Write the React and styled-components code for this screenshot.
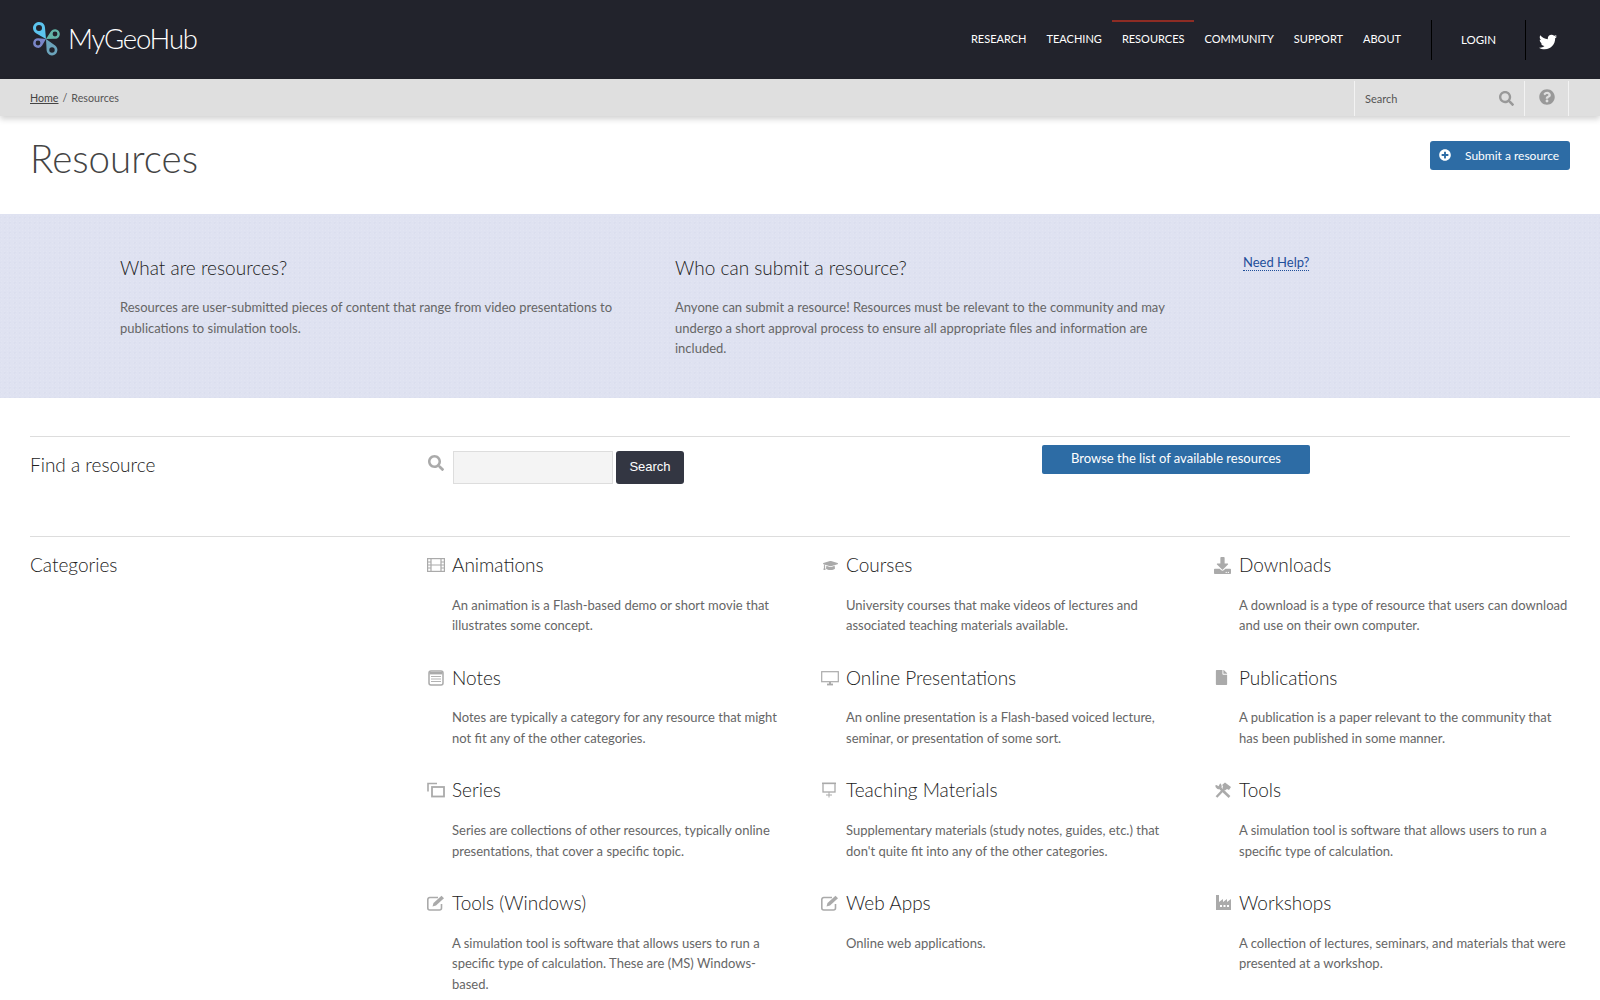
import React from "react";
import styled, { createGlobalStyle } from "styled-components";
import { FaSearch, FaQuestionCircle, FaPlusCircle, FaTwitter, FaGraduationCap, FaDownload, FaFile } from "react-icons/fa";

const Global = createGlobalStyle`
  html, body { margin: 0; padding: 0; background: #fff; }
  body { font-family: Lato, "Liberation Sans", sans-serif; color: #555; font-size: 13px; overflow-x: hidden; }
  * { box-sizing: border-box; }
`;

const Page = styled.div`width: 1600px; height: 1000px; overflow: hidden;`;

const Header = styled.header`
  height: 79px; background: #22232c; display: flex; align-items: flex-start; justify-content: space-between;
`;
const Logo = styled.a`
  display: flex; align-items: center; gap: 6px; margin: 20px 0 0 32px; color: #fff;
  font-weight: 300; font-size: 27.5px; letter-spacing: -1.2px; line-height: 38px;
`;
const RightHead = styled.div`display: flex; align-items: flex-start; padding-top: 20px;`;
const Nav = styled.nav`display: flex; margin-right: 20px;`;
const NavItem = styled.a`
  height: 40px; padding: 0 10px; border-top: 2px solid ${p => (p.$active ? "#8e2c24" : "transparent")};
  color: #fff; font-size: 11px; line-height: 34px; text-transform: uppercase; white-space: nowrap;
`;
const Login = styled.a`
  width: 95px; height: 40px; border-left: 1px solid #000; border-right: 1px solid #000;
  color: #fff; font-size: 11.5px; line-height: 40px; text-align: center; text-transform: uppercase;
`;
const Tw = styled.a`width: 74px; height: 40px; color: #fff; padding: 13px 0 0 13px; font-size: 18px; line-height: 1;`;

const Crumbs = styled.div`
  height: 37px; background: #dfdfdf; box-shadow: 0 3px 6px rgba(0,0,0,.18); display: flex; justify-content: space-between;
  position: relative; padding-left: 30px; align-items: stretch;
`;
const Trail = styled.div`font-size: 10.7px; line-height: 37px; color: #555; a { color: #444; text-decoration: underline; } span { margin: 0 4px; }`;
const Tools = styled.div`display: flex; margin-right: 31px; padding-top: 2px;`;
const SearchBox = styled.div`
  width: 171px; height: 35px; border-left: 1px solid #f3f3f3; border-right: 1px solid #f3f3f3; display: flex; align-items: center; justify-content: space-between;
  padding: 0 10px; font-size: 11px; color: #555; svg { color: #999; font-size: 15px; }
`;
const HelpBox = styled.div`
  width: 44px; height: 35px; border-right: 1px solid #f3f3f3; display: flex; justify-content: center; padding: 8px 0 0 1px; color: #999; font-size: 16px;
`;

const TitleRow = styled.div`height: 98px; padding: 23px 30px 0; display: flex; justify-content: space-between; align-items: flex-start;`;
const Title = styled.h1`margin: 0; font-size: 38.5px; font-weight: 300; color: #444; line-height: 38px;`;
const Submit = styled.a`
  display: flex; align-items: flex-start; width: 140px; height: 29px; margin-top: 2px; background: #2d6ca5; border-radius: 3px; color: #fff; font-size: 12px; line-height: 29px;
  padding-left: 9px; gap: 14px; white-space: nowrap; svg { margin-top: 8px; font-size: 12px; }
`;

const Band = styled.section`
  height: 184px; background-color: #dfe2f1;
  background-image: radial-gradient(rgba(255,255,255,.09) 1px, transparent 1px), radial-gradient(rgba(110,120,170,.035) 1px, transparent 1px);
  background-size: 3px 3px, 5px 5px; background-position: 0 0, 2px 1px;
  padding: 40px 0 0 120px; display: grid; grid-template-columns: 555px 568px auto;
`;
const BandCol = styled.div`width: ${p => p.$w || "auto"};`;
const BandH = styled.h3`margin: 0 0 16px; font-size: 19px; line-height: 27px; font-weight: 300; color: #222;`;
const BandP = styled.p`margin: 0; font-size: 13px; line-height: 20.5px; color: #666;`;
const HelpLink = styled.a`display: inline-block; margin-top: -2px; color: #1f4f9a; font-size: 13px; line-height: 16px; border-bottom: 1px dotted #1f4f9a;`;

const Row = styled.section`
  margin: 0 30px; border-top: 1px solid #ddd; display: grid; grid-template-columns: 361px 357px 357px 357px; column-gap: 36px;
`;
const FindRow = styled(Row)`margin-top: 38px; height: 100px;`;
const SideH = styled.h3`margin: 0; padding-top: 14px; font-size: 19px; line-height: 28px; font-weight: 300; color: #222;`;
const FindField = styled.div`display: flex; align-items: flex-start; padding-top: 14px; color: #aaa; font-size: 16px; svg { margin: 4px 0 0 1px; }`;
const Input = styled.input`
  width: 160px; height: 33px; margin-left: 9px; border: 1px solid #ddd; background: #f4f4f4; border-radius: 0;
`;
const SearchBtn = styled.button`
  width: 68px; height: 33px; margin-left: 3px; padding: 0 0 2px; border: 0; border-radius: 3px; background: #333642; color: #fff; font: 13px "Liberation Sans", sans-serif;
`;
const BrowseWrap = styled.div`grid-column: span 2; padding: 8px 0 0 222px;`;
const Browse = styled.a`
  display: block; width: 268px; height: 29px; background: #2d6ca5; border-radius: 2px; color: #fff; font-size: 13px; line-height: 27px; text-align: center;
`;

const CatGrid = styled.div`grid-column: span 3; display: grid; grid-template-columns: 357px 356px 356px; column-gap: 37px; padding-top: 14px; grid-auto-rows: 112.7px;`;
const Cat = styled.article`display: grid; grid-template-columns: 25px 1fr;`;
const IconCell = styled.div`color: #aaa; font-size: ${p => p.$size || 17}px; height: 28px; display: flex; align-items: center; svg { display: block; }`;
const CatH = styled.h3`margin: 0 0 15.7px; font-size: 19px; font-weight: 300; line-height: 28px; color: #222;`;
const CatP = styled.p`margin: 0; font-size: 13px; line-height: 20.5px; color: #666;`;

const Draw = ({ children, w = 18, h = 16, fill = "none" }) => (
  <svg width={w} height={h} viewBox={`0 0 ${w} ${h}`} fill={fill} stroke={fill === "none" ? "#aaa" : "none"} strokeWidth="1.2">{children}</svg>
);
const Film = () => <Draw><rect x=".6" y="1.6" width="16.8" height="12.8" /><path d="M4 2v12M14 2v12M4 8h10M.6 5h3.4M.6 8h3.4M.6 11h3.4M14 5h3.4M14 8h3.4M14 11h3.4" /></Draw>;
const Notes = () => <Draw w={18} h={16}><rect x="2" y="1" width="14" height="14" rx="2" strokeWidth="1.5" /><path d="M2.500 3.200h13" strokeWidth="2.4" /><path d="M4 6.500h10M4 9h10M4 11.500h10" strokeWidth=".9" /></Draw>;
const Series = () => <Draw><path d="M1 9.500V1.500h9" strokeWidth="1.6" /><rect x="5" y="5" width="12" height="9.500" strokeWidth="1.8" /></Draw>;
const Edit = () => <Draw w={18} h={16}><path d="M14.500 9v4a2 2 0 0 1-2 2H2.800a2 2 0 0 1-2-2V4.500a2 2 0 0 1 2-2H11" strokeWidth="1.6" /><path d="M5.500 11.500l1-3.500L14.500 .8l2.500 2.500-8 7.300z" fill="#aaa" stroke="none" /></Draw>;
const Monitor = () => <Draw><rect x=".7" y="1.700" width="16.6" height="10" /><path d="M6 14.500h6" strokeWidth="1.800" /><path d="M8 12h2v2H8z" fill="#aaa" stroke="none" /></Draw>;
const Board = () => <Draw w={18} h={16}><path d="M1 1.300h14" strokeWidth="1.400" /><rect x="2" y="1.500" width="12" height="8.500" strokeWidth="1.300" /><path d="M8 10v5.500M5 13h6" strokeWidth="1" /></Draw>;
const ToolsIcon = () => (
  <Draw w={18} h={16}>
    <path d="M6.500 6.500L15.500 15" strokeWidth="2.600" />
    <path d="M1.200 3.500a4 4 0 0 0 5.500 3.500 4 4 0 0 0-.5-5.800L4.500 4.200 2.500 3z" fill="#aaa" stroke="none" />
    <path d="M2.500 15L11 6" strokeWidth="2.400" />
    <path d="M8 3l3-2.500 6 4.500-2 3-2-1-2 1.500-2.500-2.500 .5-2z" fill="#aaa" stroke="none" />
  </Draw>
);
const Factory = () => (
  <Draw w={18} h={16} fill="#aaa">
    <path d="M2 0h3v7l4-3v3l4-3v3l4-3v11H2z" />
    <path d="M6 10h2v2H6zM9.500 10h2v2h-2zM13 10h2v2h-2z" fill="#fff" />
  </Draw>
);

const categories = [
  [<Film />, "Animations", "An animation is a Flash-based demo or short movie that illustrates some concept."],
  [<FaGraduationCap style={{ marginLeft: 2 }} />, "Courses", "University courses that make videos of lectures and associated teaching materials available.", 15],
  [<FaDownload />, "Downloads", "A download is a type of resource that users can download and use on their own computer."],
  [<Notes />, "Notes", "Notes are typically a category for any resource that might not fit any of the other categories."],
  [<Monitor />, "Online Presentations", "An online presentation is a Flash-based voiced lecture, seminar, or presentation of some sort."],
  [<FaFile />, "Publications", "A publication is a paper relevant to the community that has been published in some manner.", 15],
  [<Series />, "Series", "Series are collections of other resources, typically online presentations, that cover a specific topic."],
  [<Board />, "Teaching Materials", "Supplementary materials (study notes, guides, etc.) that don't quite fit into any of the other categories."],
  [<ToolsIcon />, "Tools", "A simulation tool is software that allows users to run a specific type of calculation."],
  [<Edit />, "Tools (Windows)", "A simulation tool is software that allows users to run a specific type of calculation. These are (MS) Windows-based."],
  [<Edit />, "Web Apps", "Online web applications."],
  [<Factory />, "Workshops", "A collection of lectures, seminars, and materials that were presented at a workshop."],
];

/* A teardrop: tip on the logo's centre, ring around (x, y). */
const Petal = ({ x, y, r, color }) => {
  const d = Math.hypot(x, y);
  const a = Math.atan2(y, x);
  const t = Math.acos(r / d);
  const p1 = [x + r * Math.cos(a + Math.PI - t), y + r * Math.sin(a + Math.PI - t)];
  const p2 = [x + r * Math.cos(a + Math.PI + t), y + r * Math.sin(a + Math.PI + t)];
  const h = r * 0.5;
  const path = `M0 0L${p2[0]} ${p2[1]}A${r} ${r} 0 1 1 ${p1[0]} ${p1[1]}Z M${x - h} ${y}a${h} ${h} 0 1 0 ${2 * h} 0a${h} ${h} 0 1 0 ${-2 * h} 0Z`;
  return <path d={path} fill={color} fillRule="evenodd" />;
};

const LogoMark = () => (
  <svg width="30" height="36" viewBox="-14 -18 30 36">
    <Petal x={-7} y={-11} r={6} color="#5cc4ee" />
    <Petal x={9} y={-5} r={4.8} color="#63b5a8" />
    <Petal x={-8} y={4} r={4.8} color="#7a86c8" />
    <Petal x={6} y={11} r={5.4} color="#6ba3bb" />
  </svg>
);

export default function App() {
  return (
    <Page>
      <Global />
      <Header>
        <Logo><LogoMark />MyGeoHub</Logo>
        <RightHead>
          <Nav>
            {["Research", "Teaching", "Resources", "Community", "Support", "About"].map(n => (
              <NavItem key={n} $active={n === "Resources"}>{n}</NavItem>
            ))}
          </Nav>
          <Login>Login</Login>
          <Tw><FaTwitter /></Tw>
        </RightHead>
      </Header>
      <Crumbs>
        <Trail><a>Home</a><span>/</span>Resources</Trail>
        <Tools>
          <SearchBox>Search<FaSearch /></SearchBox>
          <HelpBox><FaQuestionCircle /></HelpBox>
        </Tools>
      </Crumbs>
      <TitleRow>
        <Title>Resources</Title>
        <Submit><FaPlusCircle />Submit a resource</Submit>
      </TitleRow>
      <Band>
        <BandCol $w="500px">
          <BandH>What are resources?</BandH>
          <BandP>Resources are user-submitted pieces of content that range from video presentations to publications to simulation tools.</BandP>
        </BandCol>
        <BandCol $w="505px">
          <BandH>Who can submit a resource?</BandH>
          <BandP>Anyone can submit a resource! Resources must be relevant to the community and may undergo a short approval process to ensure all appropriate files and information are included.</BandP>
        </BandCol>
        <BandCol><HelpLink>Need Help?</HelpLink></BandCol>
      </Band>
      <FindRow>
        <SideH>Find a resource</SideH>
        <FindField><FaSearch /><Input /><SearchBtn>Search</SearchBtn></FindField>
        <BrowseWrap><Browse>Browse the list of available resources</Browse></BrowseWrap>
      </FindRow>
      <Row>
        <SideH>Categories</SideH>
        <CatGrid>
          {categories.map(([icon, h, p, size]) => (
            <Cat key={h}>
              <IconCell $size={size}>{icon}</IconCell>
              <div><CatH>{h}</CatH><CatP>{p}</CatP></div>
            </Cat>
          ))}
        </CatGrid>
      </Row>
    </Page>
  );
}
